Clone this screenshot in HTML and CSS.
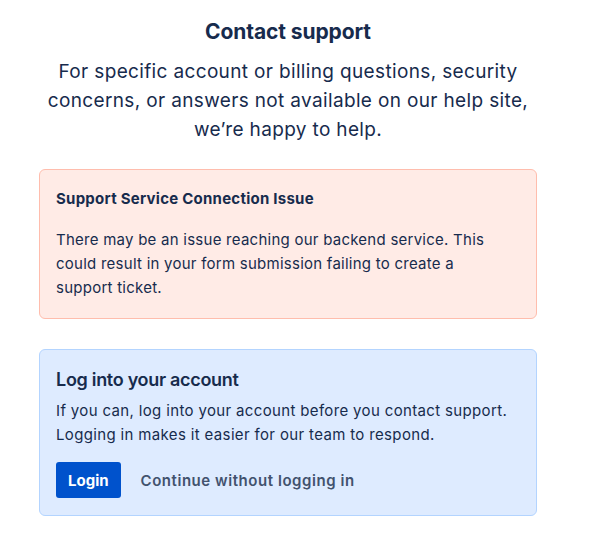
FILE: index.html
```html
<!DOCTYPE html>
<html lang="en">
<head>
<meta charset="utf-8">
<link rel="stylesheet" href="styles.css">
</head>
<body>
<main class="page">
  <header class="intro">
    <h1 class="title">Contact support</h1>
    <p class="lead">For specific account or billing questions, security concerns, or answers not available on our help site, we’re happy to help.</p>
  </header>
  <section class="notice notice-error">
    <h2 class="notice-title">Support Service Connection Issue</h2>
    <p class="notice-text">There may be an issue reaching our backend service. This could result in your form submission failing to create a support ticket.</p>
  </section>
  <section class="notice notice-info">
    <h2 class="login-title">Log into your account</h2>
    <p class="login-text">If you can, log into your account before you contact support. Logging in makes it easier for our team to respond.</p>
    <div class="actions">
      <button class="btn-primary">Login</button>
      <button class="btn-link">Continue without logging in</button>
    </div>
  </section>
</main>
</body>
</html>
```
FILE: styles.css
```css
* { box-sizing: border-box; }
html, body { margin: 0; padding: 0; background: #fff; }
body {
  font-family: Inter, "Open Sans", "Liberation Sans", sans-serif;
  color: #172B4D;
}
.page {
  width: 498px;
  margin-left: 39px;
  padding-top: 18px;
}
.intro { text-align: center; }
.title {
  margin: 0;
  font-size: 21px;
  font-weight: 700;
  line-height: 28px;
  letter-spacing: -0.1px;
}
.lead {
  margin: 11px 0 0;
  font-size: 19px;
  line-height: 29px;
  font-weight: 400;
  letter-spacing: 0.35px;
}
.notice {
  border-radius: 6px;
  border: 1px solid;
  padding: 16px;
}
.notice-error {
  margin-top: 25px;
  background: #FFEBE6;
  border-color: #FFBDAD;
  padding-top: 18px;
  padding-bottom: 18px;
}
.notice-title {
  margin: 0;
  font-size: 15px;
  font-weight: 700;
  line-height: 22px;
  letter-spacing: 0.25px;
}
.notice-text {
  margin: 18px 0 0;
  padding-right: 20px;
  font-size: 15px;
  line-height: 24px;
  letter-spacing: 0.25px;
}
.notice-info {
  margin-top: 30px;
  background: #DEEBFF;
  border-color: #B3D4FF;
  padding-top: 18px;
  padding-bottom: 17px;
}
.login-title {
  margin: 0;
  font-size: 18px;
  font-weight: 600;
  line-height: 24px;
  letter-spacing: -0.3px;
}
.login-text {
  margin: 7px 0 0;
  font-size: 15px;
  line-height: 24px;
  letter-spacing: 0.35px;
}
.actions {
  display: flex;
  align-items: center;
  gap: 20px;
  margin-top: 15px;
}
.btn-primary {
  font-family: inherit;
  height: 36px;
  padding: 0 12px;
  border: none;
  border-radius: 3px;
  background: #0052CC;
  color: #fff;
  font-size: 15px;
  font-weight: 700;
}
.btn-link {
  font-family: inherit;
  border: none;
  background: none;
  padding: 0;
  color: #42526E;
  font-size: 15px;
  font-weight: 600;
  letter-spacing: 0.55px;
}
```
